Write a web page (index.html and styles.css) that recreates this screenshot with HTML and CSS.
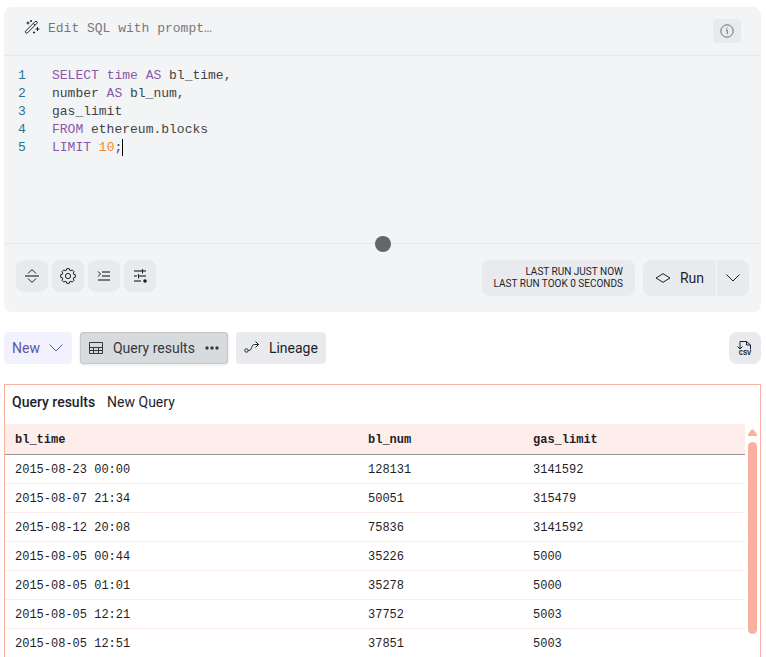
FILE: index.html
```html
<!DOCTYPE html>
<html lang="en">
<head>
  <meta charset="utf-8">
  <meta name="viewport" content="width=device-width, initial-scale=1">
  <title>New Query</title>
  <link rel="stylesheet" href="styles.css">
</head>
<body>
  <main class="page">
    <section class="editor">
      <div class="prompt">
        <svg class="icon wand" viewBox="0 0 16 16" aria-hidden="true">
          <path d="M1.5 12.2 10.8 2.9Q12 2 12.9 2.6 13.6 3.6 12.6 4.7L3.3 14Q2.5 14.5 1.8 13.8 1 13 1.5 12.2zM9.3 4.4l1.8 1.8M4 2.5v3M2.5 4h3M7 1v2M6 2h2M13.5 8v4M11.5 10h4M10 12.5v2M9 13.5h2"/>
        </svg>
        <input class="prompt-input" type="text" aria-label="Edit SQL with prompt" placeholder="Edit SQL with prompt…">
        <button class="info" type="button" aria-label="Info">
          <svg class="icon" viewBox="0 0 16 16" aria-hidden="true">
            <circle cx="8" cy="8" r="6.2"/>
            <path d="M7 7h1.2v4.2M8 4.6v1"/>
          </svg>
        </button>
      </div>

      <div class="code">
        <ol class="gutter">
          <li>1</li>
          <li>2</li>
          <li>3</li>
          <li>4</li>
          <li>5</li>
        </ol>
        <div class="sql" role="textbox" aria-label="Query" aria-multiline="true" contenteditable="true" spellcheck="false">
          <div class="line"><span class="kw">SELECT</span> <span class="kw">time</span> <span class="kw">AS</span> bl_time,</div>
          <div class="line">number <span class="kw">AS</span> bl_num,</div>
          <div class="line">gas_limit</div>
          <div class="line"><span class="kw">FROM</span> ethereum.blocks</div>
          <div class="line"><span class="kw">LIMIT</span> <span class="num">10</span>;<span class="caret"></span></div>
        </div>
        <span class="handle"></span>
      </div>

      <div class="toolbar">
        <button class="tool" type="button" aria-label="Collapse editor">
          <svg class="icon" viewBox="0 0 16 16" aria-hidden="true">
            <path d="M4 5.5l4-4 4 4M4 10.5l4 4 4-4"/>
            <path class="thick" d="M1 8h14"/>
          </svg>
        </button>
        <button class="tool" type="button" aria-label="Settings">
          <svg class="icon" viewBox="0 0 16 16" aria-hidden="true">
            <path d="M6.7.7h2.6l.4 1.6 1.2.4 1.3-.8 1.9 1.9-.8 1.3.4 1.2 1.6.4v2.6l-1.6.4-.4 1.2.8 1.3-1.9 1.9-1.3-.8-1.2.4-.4 1.6H6.7l-.4-1.6-1.2-.4-1.3.8-1.9-1.9.8-1.3-.4-1.2-1.6-.4V6.7l1.6-.4.4-1.2-.8-1.3 1.9-1.9 1.3.8 1.2-.4z"/>
            <circle cx="8" cy="8" r="2.6"/>
          </svg>
        </button>
        <button class="tool" type="button" aria-label="Format query">
          <svg class="icon" viewBox="0 0 16 16" aria-hidden="true">
            <path d="M2 3.5 4.5 6 2 8.5"/>
            <path class="thick" d="M6 4h8M6 8h8M2 12h12"/>
          </svg>
        </button>
        <button class="tool" type="button" aria-label="Parameters">
          <svg class="icon" viewBox="0 0 16 16" aria-hidden="true">
            <path class="thick" d="M2 3h8M11 3h3M2 8h3M7 8h7M2 13h7"/>
            <path d="M10.5 1v4.5M6.5 6v4.5"/>
            <circle class="fill" cx="13" cy="13" r="1.8"/>
          </svg>
        </button>
        <p class="last-run">Last run just now<br>Last run took 0 seconds</p>
        <div class="run-group">
          <button class="run" type="button">
            <svg class="icon" viewBox="0 0 16 16" aria-hidden="true"><path d="m1 8 7-4.3L15 8l-7 4.3z"/></svg>
            Run
          </button>
          <button class="run-more" type="button" aria-label="Run options">
            <svg class="icon" viewBox="0 0 16 16" aria-hidden="true"><path d="m1.5 4.5 6.5 6.500 6.500-6.500"/></svg>
          </button>
        </div>
      </div>
    </section>

    <nav class="tabs">
      <button class="tab tab-new" type="button">
        New
        <svg class="icon" viewBox="0 0 16 16" aria-hidden="true"><path d="m1.5 4.5 6.5 6.500 6.500-6.500"/></svg>
      </button>
      <button class="tab tab-active" type="button">
        <svg class="icon" viewBox="0 0 16 16" aria-hidden="true"><path d="M1.5 2.5h13v11h-13zM1.5 7.5h13M1.5 10.5h13M5.5 7.5v6M10.5 7.5v6"/></svg>
        Query results
        <svg class="icon" viewBox="0 0 16 16" aria-hidden="true">
          <circle class="fill" cx="3" cy="8" r="1.7"/>
          <circle class="fill" cx="8" cy="8" r="1.7"/>
          <circle class="fill" cx="13" cy="8" r="1.7"/>
        </svg>
      </button>
      <button class="tab" type="button">
        <svg class="icon" viewBox="0 0 16 16" aria-hidden="true">
          <circle cx="2.5" cy="10.5" r="1.7"/>
          <path d="M4.5 10.5c4.5 0 2-6 6-6h4M11.5 1.5l3 3-3 3"/>
        </svg>
        Lineage
      </button>
      <button class="tool tool-csv" type="button" aria-label="Download CSV">
        <svg class="icon" viewBox="0 0 16 16" aria-hidden="true">
          <path d="M3 9V1.5h6.5l4 3.5v4.5M9.5 1.5V5h4M.5 6.500 3 9l2.500-2.500"/>
          <text class="csv-text" x="8" y="15">CSV</text>
        </svg>
      </button>
    </nav>

    <section class="results">
      <header class="results-head">
        <h2>Query results</h2>
        <span>New Query</span>
      </header>
      <div class="results-body">
        <table>
          <thead>
            <tr><th class="col-time">bl_time</th><th class="col-num">bl_num</th><th>gas_limit</th></tr>
          </thead>
          <tbody>
            <tr><td>2015-08-23 00:00</td><td>128131</td><td>3141592</td></tr>
            <tr><td>2015-08-07 21:34</td><td>50051</td><td>315479</td></tr>
            <tr><td>2015-08-12 20:08</td><td>75836</td><td>3141592</td></tr>
            <tr><td>2015-08-05 00:44</td><td>35226</td><td>5000</td></tr>
            <tr><td>2015-08-05 01:01</td><td>35278</td><td>5000</td></tr>
            <tr><td>2015-08-05 12:21</td><td>37752</td><td>5003</td></tr>
            <tr><td>2015-08-05 12:51</td><td>37851</td><td>5003</td></tr>
          </tbody>
        </table>
        <div class="scrollbar">
          <svg class="scroll-up" viewBox="0 0 9 7" aria-hidden="true"><path d="M0 7V5.5L3.5.5h2L9 5.5V7z"/></svg>
          <span class="scroll-thumb"></span>
        </div>
      </div>
    </section>
  </main>
</body>
</html>
```
FILE: styles.css
```css
* {
  box-sizing: border-box;
}

body {
  margin: 0;
  background: #fff;
  color: #1e1e28;
  font: 14px/20px Roboto, "Liberation Sans", sans-serif;
}

button {
  border: 0;
  padding: 0;
  background: #e9eaee;
  color: inherit;
  font: inherit;
  cursor: pointer;
}

.page {
  display: flex;
  flex-direction: column;
  height: 100vh;
  overflow: hidden;
  padding: 7px 5px 0 4px;
}

.icon {
  flex: none;
  display: block;
  width: 16px;
  height: 16px;
  fill: none;
  stroke: currentColor;
}

.fill {
  fill: currentColor;
  stroke: none;
}

.thick {
  stroke: #77787f;
  stroke-width: 2;
}

/* editor */
.editor {
  flex: none;
  border-radius: 8px;
  background: #f3f4f6;
}

.prompt {
  display: flex;
  align-items: center;
  gap: 8px;
  height: 49px;
  padding: 0 20px;
  border-bottom: 1px solid #e6e8eb;
}

.wand {
  margin-bottom: 8px;
}

.prompt-input {
  flex: 1;
  min-width: 0;
  margin-bottom: 4px;
  border: 0;
  padding: 0;
  background: none;
  font: 13px/18px "Liberation Mono", monospace;
  outline: none;
}

.prompt-input::placeholder {
  color: #77787c;
}

.info {
  display: grid;
  place-items: center;
  width: 28px;
  height: 24px;
  border-radius: 4px;
  color: #6d6f75;
}

.code {
  position: relative;
  display: flex;
  gap: 24px;
  height: 188px;
  padding: 11px 16px 0 14px;
  border-bottom: 1px solid #e6e8eb;
  font: 13px/18px "Liberation Mono", monospace;
}

.gutter {
  margin: 0;
  padding: 0;
  width: 10px;
  list-style: none;
  color: #237893;
}

.sql {
  flex: 1;
  color: #444;
  outline: none;
}

.line {
  height: 18px;
  white-space: pre;
}

.kw {
  color: #8959a8;
}

.num {
  color: #f5871f;
}

.caret {
  display: inline-block;
  height: 17px;
  border-left: 1px solid #000;
  vertical-align: top;
}

.handle {
  position: absolute;
  bottom: -9px;
  left: 50%;
  width: 16px;
  height: 16px;
  margin-left: -8px;
  border-radius: 50%;
  background: #63666a;
}

.toolbar {
  display: flex;
  gap: 4px;
  padding: 16px 12px;
}

.tool {
  display: grid;
  place-items: center;
  width: 32px;
  height: 32px;
  border-radius: 8px;
}

.last-run {
  margin: 0 4px 0 auto;
  padding: 6px 12px;
  border-radius: 8px;
  background: #e9eaee;
  font-size: 10px;
  line-height: 12px;
  text-align: right;
  text-transform: uppercase;
}

.run-group {
  display: flex;
  gap: 1px;
  height: 36px;
}

.run {
  display: flex;
  align-items: center;
  gap: 9px;
  padding: 0 12px;
  border-radius: 8px 0 0 8px;
}

.run-more {
  padding: 0 8px;
  border-radius: 0 8px 8px 0;
}

/* tabs */
.tabs {
  flex: none;
  display: flex;
  gap: 8px;
  padding: 20px 0;
}

.tab {
  display: flex;
  align-items: center;
  gap: 9px;
  height: 32px;
  padding: 0 8px;
  border-radius: 4px;
}

.tab-new {
  gap: 8px;
  background: #f2f2ff;
  color: #5b57a6;
}

.tab-active {
  background: #d8dbde;
  color: #36373d;
  box-shadow: inset 0 0 1px 1px #c3c6c9, 0 1px 3px #0000001a;
}

.tool-csv {
  margin-left: auto;
}

.csv-text {
  fill: currentColor;
  stroke: none;
  font: bold 7px "Liberation Mono", monospace;
  text-anchor: middle;
}

/* results */
.results {
  flex: 1;
  min-height: 0;
  overflow: hidden;
  border: 1px solid #f9b0a0;
  border-bottom: 0;
}

.results-head {
  display: flex;
  gap: 12px;
  padding: 7px 7px 12px;
}

.results-head h2 {
  margin: 0;
  font: inherit;
  font-weight: 500;
}

.results-body {
  display: flex;
  gap: 3px;
  padding-right: 3px;
}

table {
  flex: 1;
  table-layout: fixed;
  border-collapse: separate;
  border-spacing: 0;
  font: 12px/16px "Liberation Mono", monospace;
}

th,
td {
  padding: 7px 10px 5px;
  border-bottom: 1px solid #feeeeb;
  text-align: left;
}

th {
  padding: 8px 10px 6px;
  border-bottom-color: #999;
  background: #feeeeb;
}

.col-time {
  width: 353px;
}

.col-num {
  width: 165px;
}

.scrollbar {
  display: flex;
  flex-direction: column;
  gap: 6px;
  width: 9px;
  padding-top: 5px;
}

.scroll-up {
  width: 9px;
  height: 7px;
  fill: #f9b0a0;
}

.scroll-thumb {
  height: 192px;
  border-radius: 5px;
  background: #f9b0a0;
}
```
